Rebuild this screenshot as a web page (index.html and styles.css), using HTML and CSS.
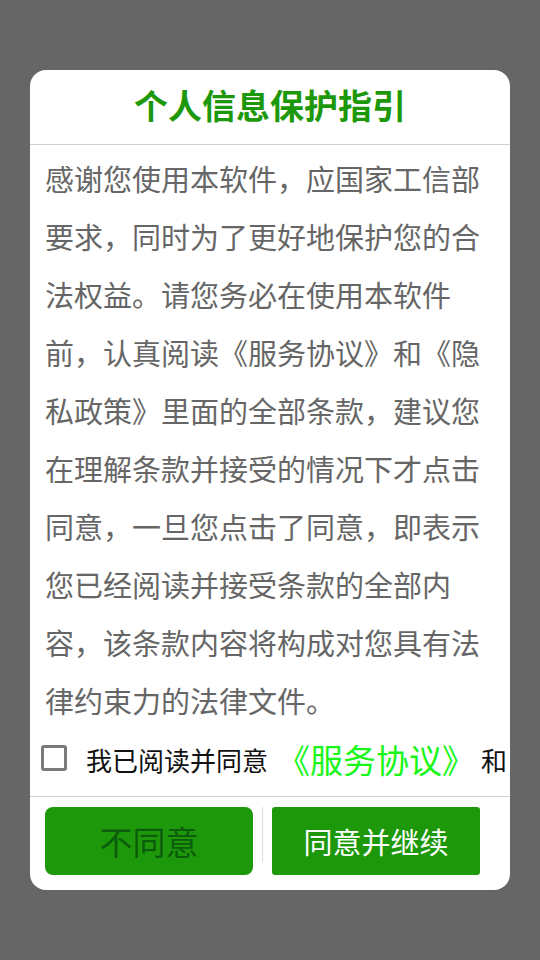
FILE: index.html
```html
<!DOCTYPE html>
<html lang="zh-CN">
<head>
<meta charset="utf-8">
<title>个人信息保护指引</title>
<link rel="stylesheet" href="styles.css">
</head>
<body>
<div class="dialog">
  <div class="header">个人信息保护指引</div>
  <div class="content">感谢您使用本软件，应国家工信部要求，同时为了更好地保护您的合法权益。请您务必在使用本软件前，认真阅读《服务协议》和《隐私政策》里面的全部条款，建议您在理解条款并接受的情况下才点击同意，一旦您点击了同意，即表示您已经阅读并接受条款的全部内容，该条款内容将构成对您具有法律约束力的法律文件。</div>
  <div class="agree-row">
    <span class="checkbox"></span>
    <span class="agree-text">我已阅读并同意</span><span class="link">《服务协议》</span><span class="agree-text">和</span>
  </div>
  <div class="footer">
    <div class="btn btn-disagree">不同意</div>
    <div class="divider"></div>
    <div class="btn btn-agree">同意并继续</div>
  </div>
</div>
</body>
</html>
```

FILE: styles.css
```css
html, body {
  margin: 0;
  padding: 0;
}
body {
  background: #666666;
  width: 540px;
  height: 960px;
  font-family: "Noto Sans CJK SC", "Noto Sans", sans-serif;
  padding-top: 70px;
  box-sizing: border-box;
}
.dialog {
  margin: 0 30px;
  height: 820px;
  background: #ffffff;
  border-radius: 16px;
  overflow: hidden;
  display: flex;
  flex-direction: column;
}
.header {
  height: 75px;
  box-sizing: border-box;
  padding-bottom: 5px;
  display: flex;
  align-items: center;
  justify-content: center;
  color: #1e980b;
  font-size: 34px;
  font-weight: bold;
  border-bottom: 1px solid #d2d2d2;
  flex: none;
}
.content {
  padding: 4px 15px 0 15px;
  font-size: 29px;
  line-height: 58px;
  color: #666666;
  height: 580px;
  flex: none;
}
.agree-row {
  height: 60px;
  margin-bottom: 7px;
  padding-left: 11px;
  display: flex;
  align-items: center;
  white-space: nowrap;
  flex: none;
}
.checkbox {
  width: 26px;
  height: 26px;
  box-sizing: border-box;
  border: 3px solid #7a7a7a;
  border-radius: 3px;
  margin-top: -3px;
  margin-right: 19px;
  flex: none;
}
.agree-text {
  font-size: 26px;
  color: #111111;
  flex: none;
}
.link {
  font-size: 33px;
  color: #18f518;
  margin: 0 6px 0 9px;
  flex: none;
}
.footer {
  border-top: 1px solid #d2d2d2;
  padding: 10px 30px 14px 15px;
  display: flex;
  align-items: flex-start;
  flex: none;
}
.btn {
  width: 208px;
  height: 68px;
  background: #1e980b;
  display: flex;
  align-items: center;
  justify-content: center;
  flex: none;
}
.btn-disagree {
  border-radius: 8px;
  color: #0b5c0b;
  font-size: 33px;
}
.btn-agree {
  border-radius: 3px;
  color: #ffffff;
  font-size: 29px;
}
.divider {
  width: 1px;
  height: 55px;
  background: #dddddd;
  margin: 0 9px;
  flex: none;
}
```
